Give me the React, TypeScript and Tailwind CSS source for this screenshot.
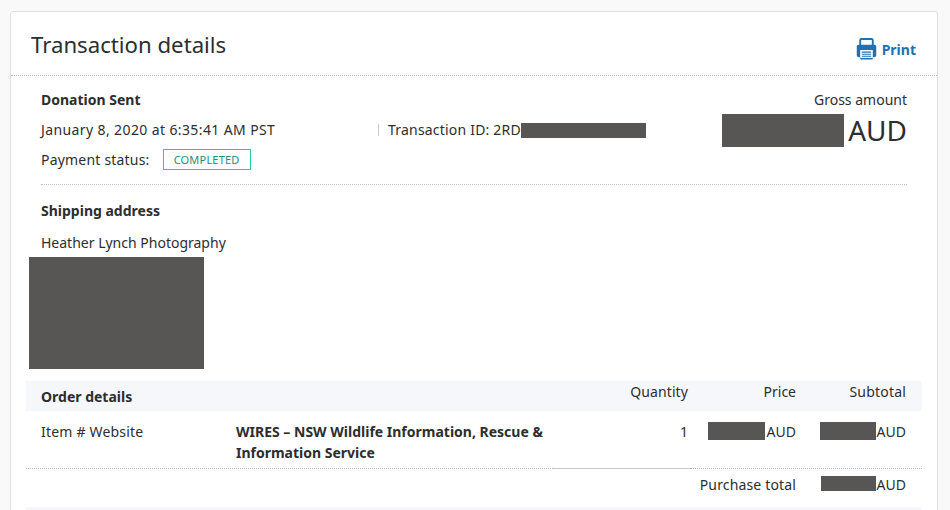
const font = { fontFamily: '"Noto Sans", sans-serif' };

function Redact({ className }: { className: string }) {
  return <div className={`bg-[#575654] shrink-0 ${className}`} />;
}

export default function App() {
  return (
    <div style={font} className="w-[950px] h-[510px] overflow-hidden bg-[#f9f9f9] pt-[11px] pl-[10px] text-[14px] text-[#2c2e2f]">
      <div className="w-[928px] h-[520px] bg-white border border-[#e0e0e0] rounded-[3px]">
        <div className="h-[64px] flex items-center justify-between pl-[20px] pr-[21px] border-b border-dotted border-[#b5b5b5]">
          <h1 className="text-[22.200px] leading-[30px] font-normal text-[#2c2e2f] mt-[2px]">Transaction details</h1>
          <div className="flex items-center gap-[5px] text-[#1f70b5] font-bold text-[14px] mt-[11px]">
            <svg width="21" height="22" viewBox="0 0 20 21" className="-mt-[1px]">
              <path d="M4 7V2.2C4 1.5 4.5 1 5.2 1h9.600c.7 0 1.200.5 1.200 1.200V7" fill="none" stroke="#1f70b5" strokeWidth="1.800" />
              <path d="M2.500 6.500h15c1 0 1.800.8 1.800 1.800v8.200c0 1-.8 1.800-1.800 1.800H16v1.400c0 .4-.3.8-.8.8H4.800c-.5 0-.8-.4-.8-.8v-1.400H2.500c-1 0-1.800-.8-1.800-1.800V8.300c0-1 .8-1.800 1.800-1.800z" fill="#1f70b5" />
              <rect x="4" y="11.500" width="12" height="7.500" fill="#fff" />
              <path d="M5.500 13.500h9M5.500 15.500h9M5.500 17.500h9" stroke="#1f70b5" strokeWidth="1" />
            </svg>
            <span>Print</span>
          </div>
        </div>

        <div className="px-[30px] pt-[14px]">
          <div className="flex justify-between border-b border-dotted border-[#c4c4c4] h-[95px]">
            <div>
              <div className="font-bold leading-[20px]">Donation Sent</div>
              <div className="flex items-center mt-[10px] leading-[20px]">
                <span className="w-[337px] tracking-[0.39px]">January 8, 2020 at 6:35:41 AM PST</span>
                <span className="w-px h-[12px] bg-[#c8ccd0] mr-[9px]" />
                <span className="tracking-[0.2px]">Transaction ID: 2RD</span>
                <Redact className="w-[125px] h-[15px]" />
              </div>
              <div className="flex items-center mt-[9px] leading-[20px]">
                <span className="tracking-[0.2px]">Payment status:</span>
                <span className="ml-[13px] border border-[#2ecb95] h-[21px] w-[88px] flex items-center justify-center text-[11px] text-[#1f8a82] tracking-[0.2px]">COMPLETED</span>
              </div>
            </div>
            <div className="flex flex-col items-end">
              <div className="leading-[20px]">Gross amount</div>
              <div className="flex items-center mt-[4px]">
                <Redact className="w-[122px] h-[33px]" />
                <span className="text-[28px] leading-[33px] ml-[4px]">AUD</span>
              </div>
            </div>
          </div>

          <div className="font-bold leading-[20px] mt-[16px]">Shipping address</div>
          <div className="leading-[20px] mt-[12px]">Heather Lynch Photography</div>
          <Redact className="w-[175px] h-[112px] -ml-[12px] mt-[4px]" />
        </div>

        <div className="ml-[15px] mr-[15px] mt-[12px]">
          <div className="h-[30px] bg-[#f5f7fa] flex pl-[15px] pr-[16px]">
            <span className="font-bold leading-[20px] mt-[6px] flex-1">Order details</span>
            <span className="w-[100px] text-right leading-[20px] mt-px tracking-[0.1px]">Quantity</span>
            <span className="w-[108px] text-right leading-[20px] mt-px">Price</span>
            <span className="w-[110px] text-right leading-[20px] mt-px tracking-[0.2px]">Subtotal</span>
          </div>
          <div className="h-[57px] flex pl-[15px] pr-[16px] pt-[10px] leading-[21px]">
            <span className="w-[195px] tracking-[0.2px]">Item # Website</span>
            <span className="w-[320px] font-bold">WIRES – NSW Wildlife Information, Rescue &amp; Information Service</span>
            <span className="w-[132px] text-right text-[#2c2e2f]">1</span>
            <span className="w-[108px] flex justify-end items-start">
              <Redact className="w-[57px] h-[18px] mt-px mr-[2px]" />
              AUD
            </span>
            <span className="w-[110px] flex justify-end items-start">
              <Redact className="w-[56px] h-[18px] mt-px mr-[1px]" />
              AUD
            </span>
          </div>
          <div className="flex h-px">
            <div className="w-[527px] border-t border-dotted border-[#b5b5b5]" />
            <div className="w-[137px] border-t border-[#c8c8c8]" />
            <div className="flex-1 border-t border-dotted border-[#b5b5b5]" />
          </div>
          <div className="h-[38px] flex justify-end items-start pr-[16px] pt-[5px] leading-[21px]">
            <span className="tracking-[0.15px]">Purchase total</span>
            <span className="w-[110px] flex justify-end items-start">
              <Redact className="w-[55px] h-[15px] mt-[2px] mr-[1px]" />
              AUD
            </span>
          </div>
          <div className="h-[8px] bg-[#f5f7fa]" />
        </div>
      </div>
    </div>
  );
}
